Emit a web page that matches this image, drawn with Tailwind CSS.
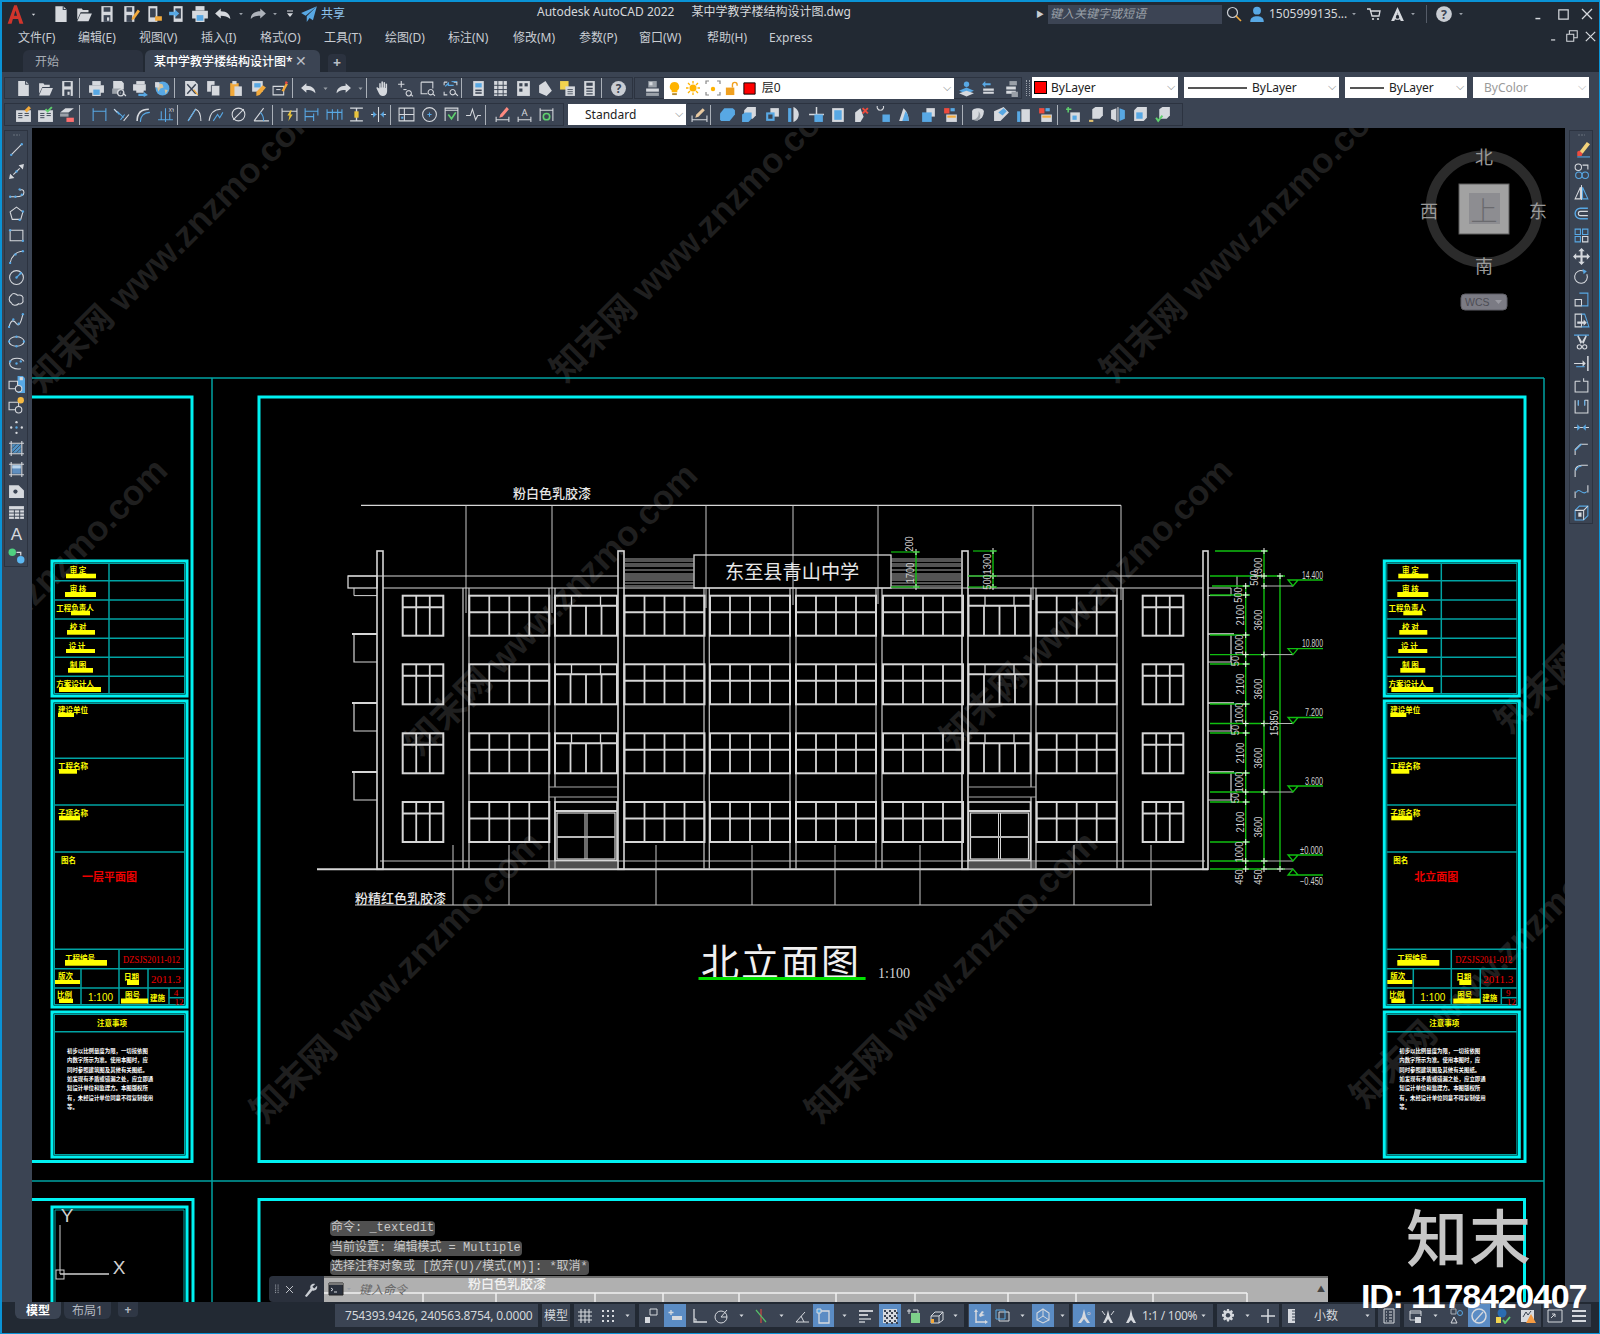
<!DOCTYPE html>
<html lang="zh">
<head>
<meta charset="utf-8">
<title>Autodesk AutoCAD 2022</title>
<script src="https://cdn.jsdelivr.net/npm/@tailwindcss/browser@4"></script>
</head>
<body class="bg-black">
<div id="app" class="relative w-[1600px] h-[1334px] overflow-hidden flex flex-col border-l-2 border-t-2 border-r border-b border-[#0a93d6] bg-[#222933] text-[#c9cdd3] text-xs font-['Noto_Sans','Noto_Sans_CJK_SC',sans-serif]">
  <!-- title bar -->
  <div class="h-[24px] flex items-center shrink-0 relative">
    <div id="quickBar" class="flex items-center h-full"></div>
    <div class="absolute left-[535px] top-[2px] flex gap-[17px] text-[#d5d8dc] whitespace-nowrap text-[12px]">
      <span>Autodesk AutoCAD 2022</span><span>某中学教学楼结构设计图.dwg</span>
    </div>
    <div id="titleRight" class="absolute left-[1034px] top-0 h-full flex items-center"></div>
  </div>
  <!-- menu bar -->
  <div class="h-[20px] flex items-center shrink-0 relative pl-[16px]">
    <div id="menuBar" class="flex items-center whitespace-nowrap pt-[3px]"></div>
    <div id="docBtns" class="absolute left-[1543px] top-0 h-full flex items-center"></div>
  </div>
  <!-- tabs -->
  <div class="h-[26px] flex items-end shrink-0 pl-[21px]">
    <div class="w-[120px] h-[22px] bg-[#2b323f] rounded-t-md pl-[12px] pt-[1px] flex items-center text-[#a8adb5]">开始</div>
    <div class="w-[175px] h-[22px] ml-[2px] bg-[#3b4453] rounded-t-md pl-[9px] pt-[1px] flex items-center text-white relative font-medium whitespace-nowrap">某中学教学楼结构设计图*
      <span class="absolute left-[150px] top-[2px] text-[#b9bec6] text-[14px]">✕</span></div>
    <div class="w-[18px] h-[18px] ml-[8px] bg-[#2b323f] rounded-t flex items-center justify-center text-[#b9bec6] text-[14px] font-bold">+</div>
  </div>
  <!-- toolbars -->
  <div class="h-[56px] shrink-0 bg-[#3b4453] pt-[5px] pl-[2px] flex flex-col gap-[4px]">
    <div class="flex h-[22px] items-stretch gap-[1px]">
      <div id="row1a" class="w-[629px] flex items-center border border-[#2c3340] pl-[7px]"></div>
      <div class="w-[388px] flex items-center border border-[#2c3340]">
        <div id="row1layer" class="flex items-center w-[29px] pl-[7px]"></div>
        <div class="w-[292px] h-[21px] bg-white flex items-center text-[#222] relative">
          <div id="layerIcons" class="flex items-center pl-[3px]"></div>
          <span class="ml-[3px]">层0</span>
          <span class="absolute right-[3px] top-[2px] text-[#8a8a8a] text-[11px]">⌵</span>
        </div>
        <div id="row1b" class="flex items-center pl-[1px]"></div>
      </div>
      <div class="w-[4px] ml-[3px] border-x border-dotted border-[#9aa0aa] my-[3px]"></div>
      <div class="w-[146px] ml-[1px] h-[21px] bg-white flex items-center text-[#222] relative pl-[1px]">
        <span class="w-[13px] h-[13px] bg-[#ff0000] border border-black mr-[4px] ml-[1px]"></span>ByLayer
        <span class="absolute right-[3px] top-[2px] text-[#8a8a8a] text-[11px]">⌵</span></div>
      <div class="w-[155px] ml-[5px] h-[21px] bg-white flex items-center text-[#222] relative pl-[4px]">
        <span class="w-[59px] h-[2px] bg-[#555] mr-[5px]"></span>ByLayer
        <span class="absolute right-[3px] top-[2px] text-[#8a8a8a] text-[11px]">⌵</span></div>
      <div class="w-[122px] ml-[5px] h-[21px] bg-white flex items-center text-[#222] relative pl-[5px]">
        <span class="w-[34px] h-[2px] bg-[#555] mr-[5px]"></span>ByLayer
        <span class="absolute right-[3px] top-[2px] text-[#8a8a8a] text-[11px]">⌵</span></div>
      <div class="w-[116px] ml-[5px] h-[21px] bg-white flex items-center text-[#9a9a9a] relative pl-[11px]">ByColor
        <span class="absolute right-[3px] top-[2px] text-[#b5b5b5] text-[11px]">⌵</span></div>
    </div>
    <div class="flex h-[23px] items-stretch gap-[1px]">
      <div id="row2a" class="w-[560px] flex items-center border border-[#2c3340] pl-[7px]"></div>
      <div class="w-[118px] ml-[3px] h-[21px] my-auto bg-white flex items-center text-[#222] relative pl-[17px]">Standard
        <span class="absolute right-[3px] top-[2px] text-[#8a8a8a] text-[11px]">⌵</span></div>
      <div id="row2b" class="w-[496px] flex items-center border-y border-r border-[#2c3340] pl-[1px]"></div>
    </div>
  </div>
  <!-- middle -->
  <div class="flex-1 flex min-h-0">
    <div class="w-[30px] shrink-0 bg-[#3b4453] pt-[2px] pl-[2px]">
      <div id="leftTools" class="w-[24px] border border-[#2c3340] flex flex-col items-center"></div>
    </div>
    <div class="flex-1 relative bg-black overflow-hidden">
      <svg id="drawing" class="absolute inset-0 block" width="1533" height="1174" viewBox="32 128 1533 1174" font-family="'Noto Sans CJK SC','Noto Sans',sans-serif"></svg>
      <!-- command history -->
      <div class="absolute left-[298px] top-[1093px] flex flex-col items-start gap-[4.500px] text-[12px] leading-[15px] text-[#c9c9c9] font-['Liberation_Mono','Noto_Sans_CJK_SC',monospace] whitespace-pre">
        <div class="bg-[#505050] rounded-sm px-[1px]">命令: _textedit</div>
        <div class="bg-[#505050] rounded-sm px-[1px]">当前设置: 编辑模式 = Multiple</div>
        <div class="bg-[#505050] rounded-sm px-[1px]">选择注释对象或 [放弃(U)/模式(M)]: *取消*</div>
      </div>
      <!-- command line -->
      <div class="absolute left-[237px] top-[1148px] w-[1059px] h-[26px] flex">
        <div id="cmdLeft" class="w-[55px] h-full bg-[#2a303c] rounded-l flex items-center pl-[3px]"></div>
        <div class="flex-1 bg-[#ebebeb]/75 flex items-center relative border-t-2 border-[#6f6f6f]">
          <span class="ml-[35px] italic text-[12px] text-[#666]">键入命令</span>
          <div id="cmdPrompt" class="absolute left-[4px] top-[3px] flex items-center"></div>
          <span class="absolute right-[3px] top-[6px] text-[8px] text-[#444]">▲</span>
        </div>
      </div>
    </div>
    <div class="w-[34px] shrink-0 bg-[#3b4453] pt-[2px] pl-[4px]">
      <div id="rightTools" class="w-[24px] border border-[#2c3340] flex flex-col items-center"></div>
    </div>
  </div>
  <!-- status bar -->
  <div class="h-[31px] shrink-0 relative flex items-start">
    <div class="w-[333px] shrink-0 flex items-start pl-[13px] h-full">
      <div class="w-[46px] h-[17px] bg-[#3b4453] rounded-b-md flex items-center justify-center text-white font-bold">模型</div>
      <div class="w-[47px] h-[17px] ml-[3px] bg-[#2f3745] rounded-b-md flex items-center justify-center text-[#b4b9c1]">布局1</div>
      <div class="w-[20px] h-[15px] ml-[7px] bg-[#2f3745] rounded-b flex items-center justify-center text-[#b4b9c1] font-bold">+</div>
    </div>
    <div id="statusBar" class="flex items-center h-[23px] mt-[2px]"></div>
  </div>
  <!-- overlay of the id stamp -->
  <span class="absolute left-[1404px] top-[1197px] text-[62px] leading-[72px] font-medium tracking-[1px] text-[#c6c6c6] font-['Noto_Sans_CJK_SC',sans-serif]">知末</span>
  <span class="absolute left-[1359px] top-[1276px] text-[34px] leading-[36px] font-bold tracking-[-1.200px] text-white font-['Liberation_Sans',sans-serif] whitespace-nowrap">ID: 1178420407</span>
</div>
<script>
const W = '#d6d9de', B = '#58a8e4', G = '#9aa0a8', O = '#f2a93b', R = '#ee4b3e', D = '#3b4453';
const F = (d, c = W) => `<path d="${d}" fill="${c}" stroke="none"/>`;
const S = (d, c = W, w = 1) => `<path d="${d}" stroke="${c}" stroke-width="${w}" fill="none"/>`;
const P = (x, y, c = B, r = 1.1) => `<circle cx="${x}" cy="${y}" r="${r}" fill="${c}" stroke="none"/>`;
const RC = (x, y, w, h, c = W) => `<rect x="${x}" y="${y}" width="${w}" height="${h}" fill="${c}" stroke="none"/>`;

const ic = {
  logoA: F('M2 15L7 1h2l5 14h-3l-1-3.5H6L5 15zM6.8 9h2.4L8 5z', '#d0352c'),
  caret: F('M5 6.5h6L8 10z', W),
  caretG: F('M5 6.5h6L8 10z', G),
  lines3: S('M4 4h8', W, 1.4) + F('M4 7h8L8 12z', W),
  new: F('M3 1h7l3 3v11H3z') + S('M10 1v3h3', D, 1),
  open: F('M2 3h4l1 1.5h5v2H5L2 13z') + F('M5 7.5h10L12 14.5H2z'),
  save: F('M3 1h10v14H3z') + RC(5, 2, 6, 4, D) + RC(5, 9, 6, 6, D) + RC(8, 11, 2, 3),
  saveas: F('M2 1h9v14H2z') + RC(4, 2, 5, 4, D) + RC(4, 9, 5, 6, D) + F('M9 11l5-7 2 1.5-5 7-2.5 1z', O),
  phone: F('M3 1h8v14H3z', W) + RC(4.5, 3, 5, 8, D) + F('M9 10h6v4H9z', O),
  phoneSend: F('M5 1h8v14H5z', W) + RC(6.5, 3, 5, 9, D) + F('M1 6h5V4l4 3.5-4 3.5V9H1z', B),
  print: F('M4 1h8v4H4z') + F('M1 5h14v7h-3v3H4v-3H1z') + RC(5, 9, 6, 5, B),
  preview: F('M3 1h8l2 2v6H3z') + F('M2 8h8v5H2z', G) + S('M11 10a2.5 2.5 0 1 0 .1 0M12.5 12.5l2.5 2.5', D, 1.4) + S('M10 9a3 3 0 1 0 .1 0M12 12l3 3', W, 1.2),
  plot: F('M4 1h8v3H4z') + F('M1 4h12v6H1z') + RC(4, 8, 7, 4) + F('M6 13h5v-2l4 3-4 2v-1H6z', B),
  globe: `<circle cx="8" cy="8" r="6.5" fill="${B}" stroke="none"/>` + F('M4 3l4 1 1 3-3 1-2 3-1-4zM10 9l3 .5-2 4z', '#d9c59a') + F('M1 2h4v5H1z', W),
  cut: F('M2 1h9l3 3v11H2z') + S('M4 4l8 9M12 4l-8 9', D, 1.3) + S('M10 9l4 5', O, 1.2),
  copy: F('M2 1h7v10H2z') + F('M6 5h8v10H6z') + S('M6 5h8v10H6z', D, .8),
  paste: F('M3 3h8v12H3z', O) + RC(5, 1, 4, 3) + F('M7 6h7v9H7z'),
  match: F('M2 1h10v10H2z') + RC(4, 3, 6, 4, B) + F('M6 11l6-6 3 2-6 7-3 1z', O),
  brush: S('M1 6h10v8H1z') + S('M4 9h4') + F('M9 10l4-7 2 1-4 7z', O) + F('M13 1l2 1-1 2-2-1z', R),
  undo: F('M6 3L1 7.5 6 12V9.5c3.5 0 6 .5 8.5 3 0-4-3-7-8.5-7z'),
  redo: F('M10 3l5 4.5L10 12V9.5c-3.5 0-6 .5-8.5 3 0-4 3-7 8.5-7z', '#aeb3bb'),
  redoW: F('M10 3l5 4.5L10 12V9.5c-3.5 0-6 .5-8.5 3 0-4 3-7 8.5-7z'),
  hand: F('M4 8V3.5c0-1 1.4-1 1.4 0V7h.6V2c0-1 1.5-1 1.5 0v5h.5V2.6c0-1 1.5-1 1.5 0V7.5h.5V4c0-1 1.4-1 1.4 0v6.5c0 3-1.8 4.5-4 4.5-2 0-3-1-4-3L1.5 8c-.5-1 .7-1.5 1.3-.7z'),
  zoomrt: S('M4 1v6M1 4h6') + S('M6 9h3') + S('M11 10a2.5 2.5 0 1 0 .1 0M12.7 13l2.3 2.3'),
  zoomwin: S('M2 2h11v6M2 2v11h6') + S('M11 9a2.5 2.5 0 1 0 .1 0M12.7 12.5l2.3 2.5'),
  zoomprev: S('M2 2h3M11 2h3v3M2 2v3M2 11v3h3') + F('M9 1h5v1H9z', B) + S('M3 6l3-3v2h5', B, 1.2) + S('M10 9a2.5 2.5 0 1 0 .1 0M12 12l3 3'),
  props: F('M3 1h10v14H3z') + RC(5, 3, 6, 4, B) + RC(5, 9, 6, 1.5, D) + RC(5, 11.5, 6, 1.5, D),
  sheet: F('M2 1h12v14H2z') + S('M5.5 1v14M10.5 1v14M2 5h12M2 9h12M2 13h12', D, .9),
  tool: F('M2 1h12v14H2z') + RC(4, 3, 3, 3, D) + RC(9, 3, 3, 3, D) + RC(4, 8, 3, 3, D) + RC(9, 8, 3, 6, W),
  design: F('M2 5l6-4 6 9-5 5-7-3z'),
  markup: F('M1 1h8v8H1z', '#f2d34f') + F('M6 6h9v9H6z') + S('M8 9h5M8 11h5M8 13h5', D, .8),
  calc: F('M3 1h10v14H3z') + RC(5, 2.5, 6, 3, D) + S('M5 8h6M5 10.5h6M5 13h6', D, 1.2),
  help: `<circle cx="8" cy="8" r="7" fill="#c9cdd3" stroke="none"/><text x="8" y="12" text-anchor="middle" font-size="11" font-weight="700" fill="#3b4453" stroke="none">?</text>`,
  layers: F('M2 8h12v3H2z') + F('M2 12h12v3H2z', G) + F('M4 1h8v6H4z', G) + RC(5, 2, 3, 3),
  bulb: F('M8 1a5 5 0 0 1 3 9v2H5v-2a5 5 0 0 1 3-9z', '#ffb300') + RC(5.5, 13, 5, 2, '#b58a2d'),
  sun: `<circle cx="8" cy="8" r="3.5" fill="#ffb300" stroke="none"/>` + S('M8 1v2.5M8 12.5V15M1 8h2.5M12.5 8H15M3 3l2 2M11 11l2 2M13 3l-2 2M5 11l-2 2', '#ffb300', 1.3),
  freeze: S('M1 4V1h3M12 1h3v3M15 12v3h-3M4 15H1v-3', '#888', 1.2) + `<circle cx="8" cy="9" r="2.2" fill="#ffb300" stroke="none"/>`,
  lock: F('M2 7h9v8H2z', '#f0a020') + S('M9 7V4a2.5 2.5 0 0 1 5 0v1', '#f0a020', 1.5),
  redsq: RC(2, 2, 12, 12, '#ff0000') + S('M2 2h12v12H2z', '#000', 1),
  lay1: F('M1 10l7-3 7 3-7 3z', B) + F('M1 12.5l7 3 7-3-7-2.5z') + `<circle cx="8" cy="4" r="2.5" fill="${B}" stroke="none"/>`,
  lay2: F('M3 8h10v2H3zM3 11h10v2H3z') + F('M5 1l-3 3 3 3V5h5V3H5z', B),
  lay3: F('M4 6h9v3H4zM4 10h9v3H4z') + F('M7 1h7v4H7z', G) + RC(9, 11, 6, 5, G),
  note: F('M1 4h14v11H1z') + S('M3 7h4M3 9h4M3 11h4M9 7h4M9 9h4', D, .9) + F('M9 4l4-4 2 2-4 4z', O),
  noteOk: F('M1 4h14v11H1z') + S('M3 7h4M3 9h4M3 11h4M9 7h4M9 9h4', D, .9) + S('M8 3l2 2 4-4', '#5fd06e', 1.8),
  eraser: F('M1 6l5-4h8L9 6z') + F('M1 7h8v3H1z', G) + F('M7 11h7v4H7z', '#ff6f6f'),
  dimL: S('M2 2v12M14 2v12M2 5h12', B),
  dimA: S('M1 3l5 5M7 13l4-5M4 5l6 6', B) + S('M1 3l3 3M10 14l5-6', W),
  dimArc: S('M2 14c0-7 4-11 11-11', W, 1.5) + S('M5 15c0-5 3-9 9-9', B),
  dimOrd: S('M1 13h14M8 2v13M4 5v8M12 7v6', B) + `<text x="11" y="6" font-size="5" fill="${W}" stroke="none">XY</text>`,
  dimRad: S('M2 14L9 3c3 1 5 5 5 11', W) + S('M2 14L9 3', B),
  dimJog: S('M1 14C2 7 6 3 12 3') + S('M5 14l4-6 2 3 3-5', B),
  dimDia: `<circle cx="8" cy="8" r="6" fill="none"/>` + S('M3 13L13 3', W),
  dimAng: S('M1 14h14M1 14L10 2') + S('M7 6c2 2 3 5 3 8', B),
  dimQuick: S('M1 2v12M15 2v12M1 5h14') + F('M9 4l-3 5h2l-1 5 4-6H9l1-4z', '#e8c33c'),
  dimBase: S('M2 2v12M14 2v7M2 5h12M2 10h8M10 7v7', B),
  dimCont: S('M1 3v10M6 3v10M11 3v10M15 3v10M1 6h14', B),
  dimSpace: S('M2 2h12M2 14h12M8 2v12', W, 1.3) + RC(6, 5, 4, 6, '#e8c33c'),
  dimBreak: S('M8 1v14M1 8h5M10 8h5', W) + F('M3 5l3 3-3 3zM13 5l-3 3 3 3z', B),
  tol: S('M1 2h14v12H1zM6 2v12M1 8h14', W) + F('M3 10h2v2H3z', B),
  center: `<circle cx="8" cy="8" r="6.5" fill="none"/>` + S('M6 8h4M8 6v4', B),
  inspect: S('M2 14V2h12v12M2 4h12') + S('M5 8l3 4 4-6', '#5fd06e', 1.6),
  jog: S('M1 9h4l2-6 3 10 2-4h3', W),
  editT: S('M2 13h12M2 10v5M14 10v5') + F('M6 8l6-7 2 2-6 7-3 1z', '#ff8a80'),
  textA: S('M2 13h12M2 10v5M14 10v5') + `<text x="8" y="9" text-anchor="middle" font-size="9" fill="${W}" stroke="none">A</text>`,
  update: S('M2 2v12M14 2v12M2 4h12') + `<circle cx="8" cy="10" r="3" fill="none" stroke="#5fd06e" stroke-width="1.5"/>`,
  dimSt: S('M1 13h14M1 9v6M15 9v6') + F('M5 8l6-6 2 2-6 6-3 1z', '#e8c9a0'),
  sol1: F('M1 7l4-5h8l2 2v4l-5 6H2l-1-1z', B),
  sol2: F('M3 4l3-3h8v8l-3 3H3z', W) + F('M1 8l3-2h6v6l-3 3H1z', B),
  sol3: F('M6 2h8v8H6z') + F('M2 6h8v8H2z', B) + RC(4, 8, 4, 4, D),
  half: F('M2 2h3v13H2z', B) + F('M7 1c3 1 5 4 5 7s-2 6-5 7z', W),
  pmove: S('M8 1v14M1 8h14', W, 1.4) + F('M6 8h8v7H6z', B),
  pface: F('M2 2h11v13H2z') + RC(4, 4, 7, 9, B),
  pdel: F('M2 15V6l5-4 3 8-3 5z') + S('M9 2l5 5M14 2L9 7', R, 1.8),
  prot: S('M5 4a3 3 0 1 1 .1 0') + F('M7 8h7v7H7z', B),
  pcopy: F('M2 14L6 2c3 2 5 7 5 12z', W) + F('M5 14l3-9c2 2 3 5 3 9z', B),
  pext: F('M6 2h8v8H6z') + F('M2 6h9v9H2z', B),
  pcol: F('M2 2h5v5H2z', R) + F('M8 2h4v3H8z', B) + F('M4 8h10v7H4z') + RC(5, 9, 8, 2, O),
  cylA: F('M2 13V5c0-4 11-4 11 0 0 5-3 10-11 8z') + F('M2 13c4 0 7-3 6-8 2 2 3 6-1 9z', G),
  cylB: F('M1 14V5l9-4 5 5-8 8z') + F('M5 6l5-4 3 3-4 4z', B),
  cylC: F('M6 3h8v12H6z', W) + F('M2 5h3v10H2z', B),
  plusBox: F('M5 6h9v9H5z', W) + RC(7, 9, 4, 4, B) + S('M3 1v5M1 3h5', '#5fd06e', 1.4),
  boxG: F('M4 3l3-2h7v8l-3 3H4z', W) + F('M1 13h4v2H1z', '#e0c070'),
  splitBox: F('M1 4l5-2v12l-5-2z', W) + F('M9 2l5 2v8l-5 2z', B) + RC(7, 1, 1, 14),
  ext3: F('M2 4l3-3h9v10l-3 3H2z', W) + RC(4, 6, 6, 6, B),
  okBox: F('M4 3l3-2h7v8l-3 3H4z', W) + S('M1 11l2 3 4-5', '#5fd06e', 1.8),
  /* left tools */
  tLine: S('M3 13L13 3') + P(3, 13) + P(13, 3),
  tArrow: S('M5 11l6-6') + F('M1 15l1-5 4 4zM15 1l-1 5-4-4z') + P(8, 8),
  tPoly: S('M2 12h5c5 0 8-1 8-4 0-3-3-3-4-2') + P(2, 12) + P(7, 12) + P(13, 10) + P(11, 5),
  tPgon: S('M8 2l6 4.5-2 7H4l-2-7z') + P(11, 14) + P(14, 6),
  tRect: S('M2 3h12v10H2z') + P(2, 3) + P(14, 13),
  tArc: S('M2 14C3 8 8 3 14 3') + P(2, 14) + P(7, 6) + P(14, 3),
  tCirc: `<circle cx="8" cy="8" r="6.5" fill="none"/>` + S('M8 8l4-4', B) + P(8, 8) + P(12, 4),
  tCloud: S('M3 4c2-3 5-1 6 0 3-1 6 1 5 4 1 3-2 5-4 4-2 2-6 2-7-1-2-1-3-5 0-7z'),
  tSpl: S('M1 14c2-8 5-6 7-3s4 0 6-9') + P(1, 14) + P(5, 7) + P(10, 11) + P(14, 2),
  tEll: `<ellipse cx="8" cy="8" rx="7" ry="4.5" fill="none"/>` + P(8, 3.5) + P(8, 12.5) + P(15, 8) + P(1, 8),
  tEArc: S('M12 13C6 14 0 11 2 6c2-4 11-4 13 0') + P(2, 6) + P(8, 8) + P(12, 6),
  tIns: F('M9 0h5l2 2v14H9z', B) + F('M11 1h3v3h-3z') + S('M1 5h8v7H1z') + `<circle cx="10" cy="12" r="3" fill="${D}" stroke="${W}"/>`,
  tBlk: S('M1 5h9v7H1z') + `<circle cx="10" cy="12" r="3" fill="${D}" stroke="${W}"/>` + `<circle cx="12" cy="3" r="3" fill="#f5b942" stroke="none"/>`,
  tPts: P(8, 3, W) + P(3, 8, W) + P(13, 8, W) + P(8, 13, W) + P(8, 8, B),
  tHatch: S('M3 1v14M13 1v14M1 3h14M1 13h14') + `<rect x="4" y="4" width="8" height="8" fill="${B}" opacity=".8" stroke="none"/>` + S('M4 8l4-4M4 12l8-8M8 12l4-4', D, .8),
  tGrad: S('M3 1v14M13 1v14M1 3h14M1 13h14') + RC(4, 4, 8, 8, '#5f8fc0') + RC(4, 4, 8, 3, '#b9d4ec'),
  tRegion: F('M1 2h9l5 5v7H1z') + `<circle cx="7" cy="8" r="2" fill="${D}" stroke="none"/>`,
  tTable: F('M1 2h14v12H1z') + S('M1 5.5h14M1 8.5h14M1 11.5h14M6 5.5v8.5M11 5.5v8.5', D, .9),
  tText: `<text x="8" y="14" text-anchor="middle" font-size="16" fill="${W}" stroke="none" font-family="Liberation Sans">A</text>`,
  tGreen: `<circle cx="4" cy="5" r="3.5" fill="#4fd080" stroke="none"/><circle cx="12" cy="12" r="3.5" fill="#5cb8f2" stroke="none"/>` + S('M8 5h4v3', W, 1.2),
  /* right tools */
  rEras: F('M6 10L13 1l3 2-7 9z', '#f3d27a') + F('M4 10l2-1 3 3-1 2H4z', R) + S('M4 15h12', B),
  rCopy: `<circle cx="5" cy="4" r="3" fill="none"/>` + S('M9 2h5v4') + `<circle cx="5.5" cy="11.5" r="3" fill="none" stroke="${B}"/><circle cx="11.5" cy="11.5" r="3" fill="none" stroke="${B}"/>`,
  rMirror: S('M7 3L2 14h5z') + S('M9 3l5 11H9z', B) + S('M8 1v14'),
  rOffset: S('M14 3H7a5 5 0 0 0 0 10h7', B, 1.3) + S('M14 6H7a2 2 0 0 0 0 4h7', W),
  rArray: S('M2 2h5v5H2zM9 2h5v5H9zM2 9h5v5H2z', B) + S('M9 9h5v5H9z', W),
  rMove: F('M8 0l3 3H9v4h4V5l3 3-3 3V9H9v4h2l-3 3-3-3h2V9H3v2L0 8l3-3v2h4V3H5z'),
  rRot: S('M13 5a6 6 0 1 1-3-3') + F('M9 0l4 2-3 3z', B),
  rScale: S('M2 8h6v6H2z') + S('M6 2h8v12H8', B),
  rStretch: S('M2 2h6v12H2z') + S('M8 2h3l4 12H8', B) + F('M4 9h6V7l3 3-3 3v-2H4z'),
  rTrim: S('M1 2h14', B, 1.2) + F('M5 2l4 7-2 1-3-7zM12 2L8 9l2 1 3-7z') + `<circle cx="6" cy="13" r="2" fill="none"/><circle cx="11" cy="13" r="2" fill="none"/>`,
  rExt: S('M14 1v14', W, 1.4) + S('M1 8h10', W) + F('M9 5l3 3-3 3z', W) + S('M3 11h8', B),
  rBreak1: S('M2 5h5M10 2v3h4v10H2V5'),
  rBreak2: S('M2 3v12h12V3H11M5 3h0M5 3v5M11 3v5', W) + S('M5 3v5M11 3v5', B),
  rJoin: S('M1 8h14', W) + F('M4 5l3 3-3 3zM12 5L9 8l3 3z', B),
  rCham: S('M2 14V9l5-5h7', W) + S('M2 10L8 4', B),
  rFil: S('M2 15V9c0-3 3-5 6-5h6') + S('M3 9c0-2 2-4 5-4', B),
  rBlend: S('M2 14V8M14 2v7', W) + S('M3 9c3-6 6 4 10-1', B),
  rCube: S('M2 6l4-4h8v9l-4 4H2z', B) + S('M2 6h8v9M10 6l4-4') + RC(5, 8, 3, 4, W),
  /* status */
  grid: S('M4 1v14M8 1v14M12 1v14M1 4h14M1 8h14M1 12h14', W, 1.1),
  dots: `<g fill="${W}" stroke="none">` + [3, 8, 13].map(x => [3, 8, 13].map(y => `<rect x="${x - 1}" y="${y - 1}" width="2" height="2"/>`).join('')).join('') + `</g>`,
  stInfer: S('M7 1h7v6H7z') + F('M2 9h5v6H2z'),
  stDyn: S('M4 2v5M1.5 4.5h5', W, 1.3) + F('M5 8h10v4H5z'),
  stOrtho: S('M3 1v13h13', W, 1.3) + S('M3 11h2v3', W),
  stPolar: `<circle cx="8" cy="9" r="6" fill="none"/>` + S('M8 9l6-7M8 9h6', W),
  stIso: S('M8 1v14', R) + S('M3 2l10 12', '#56c06a', 1.2),
  stAng: S('M2 14h13M2 14L11 4') + S('M7 8l3 6', W),
  stFrame: S('M3 3h10v12H3z', W, 1.3) + RC(1, 1, 4, 4, B) + S('M1 1h4v4H1z', W),
  stLw: S('M1 3h14', W, 1.8) + S('M1 7h9', W, 1.8) + S('M1 11h12', W, 1.3) + S('M1 14h6', W, 1.3),
  stTrans: F('M1 1h14v14H1z', W) + `<g fill="${D}" stroke="none">` + [1, 6, 11].map(x => [1, 6, 11].map(y => `<rect x="${x + 1}" y="${y + 1}" width="2" height="2"/><rect x="${x + 3}" y="${y + 3}" width="2" height="2"/>`).join('')).join('') + `</g>`,
  stCyc: F('M5 5h9v10H5z', '#7ed08a') + S('M3 1v5M1 3h4M7 2h5v3', W),
  st3d: S('M2 8l4-4h8v8l-4 3H2z') + S('M2 8h8v7M10 8l4-4') + RC(2, 11, 3, 4, O),
  stUcs: S('M4 15V3', W, 1.5) + S('M4 14h10', W, 1.5) + F('M2 4l2-3 2 3z') + F('M13 12l3 2-3 2z') + F('M7 7l3-4 2 1-2 2 3 1-5 2z', W),
  stDashF: S('M4 4h10v9H4z', W) + S('M1 2h9v9H1z', B),
  stGiz: S('M8 1l6 4v7l-6 3-6-3V5z', W, 1.1) + S('M8 8V1M8 8l6 4M8 8l-6 4', W, 1),
  stAnn1: F('M8 1l2 8 4 6h-3l-3-4-3 4H2l4-6z') + `<text x="11" y="7" font-size="6" fill="${W}" stroke="none">o</text>`,
  stAnn2: F('M8 2l1.5 6 3.5 7h-2.5L8 11l-2.5 4H3l3.5-7z') + S('M2 3l3 4M14 3l-3 4', W),
  stAnn3: F('M8 1l1.5 7 3.5 7h-2.5L8 12l-2.5 3H3l3.5-7z'),
  gear: F('M7 1h2l.5 2.2 2-1.2L13 3.500l-1.200 2L14 6v2.500l-2.200.5L13 11l-1.500 1.500-2-1.200L9 13.500H7l-.5-2.200-2 1.200L3 11l1.200-2L2 8.500V6l2.200-.5L3 3.500 4.500 2l2 1.200z') + `<circle cx="8" cy="7.300" r="2.200" fill="${D}" stroke="none"/>`,
  plus: S('M8 1v14M1 8h14', W, 1.5),
  ruler: F('M4 1h7v14H4z') + S('M8 3h3M8 6h3M8 9h3M8 12h3', D, 1),
  custom: S('M3 1h10v14H3z') + S('M5 4h1M8 4h3M5 7h1M8 7h3M5 10h1M8 10h3M5 13h1M8 13h3'),
  unlock: S('M2 3h11v5M2 3v9h5M2 5h11') + F('M7 9h6v6H7z'),
  isoObj: S('M3 1h5v5H3z', '#a9aeb6') + `<circle cx="12" cy="5" r="2.5" fill="none" stroke="${B}"/>` + S('M6 9l3 6H3z'),
  noteCircle: `<circle cx="8" cy="8" r="7" fill="none" stroke-width="1.5"/>` + S('M4 13L12 4', W, 1.2),
  globeOk: `<circle cx="7" cy="5" r="4.5" fill="#2b6cb0" stroke="none"/>` + F('M1 9h5v6H1z', '#f2d34f') + S('M8 12l2 3 5-6', '#5fd06e', 1.8),
  warn: F('M1 2h13v12H1z', W) + S('M3 9l3-5 2 3 3-4', D, 1) + F('M11 6l5 9H6z', '#f59b42'),
  fitWin: S('M1 2h14v12H1z') + S('M4 10l4-4M8 6H5M8 6v3', W),
  menu3: S('M1 3h14M1 8h14M1 13h14', W, 1.8),
  grip: `<g fill="#9aa0aa" stroke="none">` + [2, 5, 8, 11, 14].map(x => `<rect x="${x}" y="6" width="1" height="1"/><rect x="${x}" y="9" width="1" height="1"/>`).join('') + `</g>`,
  plane: F('M15 1L1 7l4 2.5zM15 1L6 10v5l2.5-3.5 3 2z', B),
  search: `<circle cx="6.500" cy="6.500" r="5" fill="none" stroke="#c9cdd3" stroke-width="1.200"/>` + S('M10 10l5 5', O, 1.600),
  user: `<circle cx="8" cy="5" r="3.5" fill="${B}" stroke="none"/>` + F('M2 15c0-4 3-5 6-5s6 1 6 5z', B),
  cart: S('M1 3h3l2 7h7l1-5H5', W, 1.3) + P(7, 13, W) + P(12, 13, W),
  a360: F('M8 1l6 13h-3L8 6 5 14H2z') + `<circle cx="8" cy="10" r="2.5" fill="none" stroke="${W}"/>`,
  minB: S('M3 13h6', W, 1.8),
  maxB: S('M3 3h10v10H3z', W, 1.3),
  xB: S('M3 3l10 10M13 3L3 13', W, 1.3),
  restB: S('M2 6h8v8H2zM5 6V2h9v8h-4', W, 1.2),
  gripV: `<g fill="#aeb3bb" stroke="none">` + [1, 4, 7, 10, 13].map(y => `<rect x="5" y="${y}" width="1.5" height="1.5"/><rect x="9" y="${y}" width="1.5" height="1.5"/>`).join('') + `</g>`,
  wrench: F('M2 15l6-8c-1-3 1-6 5-5l-3 3 2 2 3-3c1 4-3 6-5 5l-6 7z', '#c9cdd3'),
  prompt: RC(1, 2, 14, 12, '#2a303c') + S('M1 2h14v12H1z', '#222', 1) + S('M3 7l2 1.5L3 10M6 11h3', W, 1) + RC(1, 2, 14, 2, '#777'),
};

const icon = (name, size = 17) => `<svg class="block" width="${size}" height="${size}" viewBox="0 0 16 16" fill="none" stroke="${W}" stroke-width="1">${ic[name] || ''}</svg>`;
const cell = (name, w = 22, size = 17) => `<div class="flex items-center justify-center h-[23px] shrink-0" style="width:${w}px">${icon(name, size)}</div>`;

function renderRow(list) {
  return list.map(n => {
    if (n === '|') return '<div class="w-[6px] h-[20px] shrink-0 flex"><div class="w-[1px] h-full bg-[#aab0b8]"></div></div>';
    if (n === '||') return '<div class="w-[9px] h-[20px] shrink-0 flex"><div class="w-[1px] h-full bg-[#aab0b8]"></div></div>';
    if (n === 'v') return cell('caretG', 12, 11);
    return cell(n, 22.3, 17);
  }).join('');
}

// title bar
document.getElementById('quickBar').innerHTML = [
  ['logoA', 27, 21], ['caret', 9, 11], ['', 12, 1], ['new', 22, 18], ['open', 23, 18], ['save', 24, 18], ['saveas', 23, 18],
  ['phone', 24, 18], ['phoneSend', 22, 18], ['print', 24, 18], ['undo', 22, 18], ['caretG', 13, 10], ['redo', 21, 18], ['caretG', 13, 10], ['lines3', 17, 12], ['plane', 22, 18]
].map(c => cell(c[0], c[1], c[2])).join('') + '<span class="text-[#8ec4ee] ml-[1px]">共享</span>';

const titleRight = document.getElementById('titleRight');
titleRight.innerHTML = `<span class="text-[8px] mr-[4px] text-[#c9cdd3]">▶</span>
  <div class="w-[174px] h-[19px] bg-[#3c4454] flex items-center pl-[2px] italic text-[#9aa0a8]">键入关键字或短语</div>
  ${cell('search', 24, 16)}${cell('user', 21, 18)}
  <span class="ml-[2px] text-[#d5d8dc]">1505999135...</span>${cell('caretG', 14, 10)}
  ${cell('cart', 26, 16)}${cell('a360', 20, 17)}${cell('caretG', 12, 10)}
  <div class="w-[1px] h-[18px] bg-[#555c68] mx-[7px]"></div>${cell('help', 20, 18)}${cell('caretG', 14, 10)}
  <div class="w-[59px]"></div>${cell('minB', 24, 13)}${cell('maxB', 24, 15)}${cell('xB', 24, 16)}`;

// menu bar
const menus = [['文件(F)', 60], ['编辑(E)', 61], ['视图(V)', 62], ['插入(I)', 59], ['格式(O)', 64], ['工具(T)', 61], ['绘图(D)', 63], ['标注(N)', 65], ['修改(M)', 66], ['参数(P)', 60], ['窗口(W)', 68], ['帮助(H)', 62], ['Express', 60]];
document.getElementById('menuBar').innerHTML = menus.map(m => `<span style="width:${m[1]}px">${m[0]}</span>`).join('');
document.getElementById('docBtns').innerHTML = cell('minB', 18, 11) + cell('restB', 18, 14) + cell('xB', 18, 15);

// toolbars
document.getElementById('row1a').innerHTML = renderRow(['new', 'open', 'save', '|', 'print', 'preview', 'plot', 'globe', '|', 'cut', 'copy', 'paste', 'match', 'brush', '|', 'undo', 'v', 'redoW', 'v', '|', 'hand', 'zoomrt', 'zoomwin', 'zoomprev', '|', 'props', 'sheet', 'tool', 'design', 'markup', 'calc', '|', 'help']);
document.getElementById('row1layer').innerHTML = cell('layers', 20, 17);
document.getElementById('layerIcons').innerHTML = cell('bulb', 16, 15) + cell('sun', 21, 16) + cell('freeze', 19, 16) + cell('lock', 18, 15) + cell('redsq', 18, 15);
document.getElementById('row1b').innerHTML = cell('lay1', 22, 17) + cell('lay2', 22, 17) + cell('lay3', 22, 17);
document.getElementById('row2a').innerHTML = renderRow(['note', 'noteOk', 'eraser', '||', 'dimL', 'dimA', 'dimArc', 'dimOrd', '|', 'dimRad', 'dimJog', 'dimDia', 'dimAng', '|', 'dimQuick', 'dimBase', 'dimCont', 'dimSpace', 'dimBreak', '|', 'tol', 'center', 'inspect', 'jog', '|', 'editT', 'textA', 'update']);
document.getElementById('row2b').innerHTML = renderRow(['dimSt', '|', 'sol1', 'sol2', 'sol3', 'half', 'pmove', 'pface', 'pdel', 'prot', 'pcopy', 'pext', 'pcol', '|', 'cylA', 'cylB', 'cylC', 'pcol', '|', 'plusBox', 'boxG', 'splitBox', 'ext3', 'okBox']);

// side tools
const sideTool = n => `<div class="w-[22px] h-[21.35px] flex items-center justify-center shrink-0">${icon(n, 17)}</div>`;
const gripCell = `<div class="h-[8px] flex items-center">${icon('grip', 16).replace('height="16"', 'height="8"')}</div>`;
document.getElementById('leftTools').innerHTML = gripCell + ['tLine', 'tArrow', 'tPoly', 'tPgon', 'tRect', 'tArc', 'tCirc', 'tCloud', 'tSpl', 'tEll', 'tEArc', 'tIns', 'tBlk', 'tPts', 'tHatch', 'tGrad', 'tRegion', 'tTable', 'tText', 'tGreen'].map(sideTool).join('');
document.getElementById('rightTools').innerHTML = gripCell + ['rEras', 'rCopy', 'rMirror', 'rOffset', 'rArray', 'rMove', 'rRot', 'rScale', 'rStretch', 'rTrim', 'rExt', 'rBreak1', 'rBreak2', 'rJoin', 'rCham', 'rFil', 'rBlend', 'rCube'].map(sideTool).join('');

// command line
document.getElementById('cmdLeft').innerHTML = cell('gripV', 10, 14) + cell('xB', 14, 11) + '<div class="w-[5px]"></div>' + cell('wrench', 18, 15);
document.getElementById('cmdPrompt').innerHTML = icon('prompt', 16) + icon('caretG', 10);

// status bar
const panel = (items, ml) => `<div class="flex items-center h-[23px] bg-[#3b4453] shrink-0" style="margin-left:${ml}px">${items.join('')}</div>`;
const a = (n, w) => `<div class="h-[23px] flex items-center justify-center shrink-0" style="width:${w}px"><div class="w-[22px] h-[23px] bg-[#5b8cc4] flex items-center justify-center">${icon(n, 16)}</div></div>`;
const c = (n, w) => n === 'v' ? cell('caret', w, 11) : cell(n, w, 16);
document.getElementById('statusBar').innerHTML = [
  panel(['<span class="w-[203px] pl-[10px] text-[12px] text-[#d5d8dc] whitespace-nowrap tracking-[-.2px]">754393.9426, 240563.8754, 0.0000</span>'], 0),
  panel(['<span class="w-[28px] text-center text-[#d5d8dc]">模型</span>'], 4),
  panel([c('grid', 22), c('dots', 24), c('v', 15)], 4),
  panel([c('stInfer', 23), a('stDyn', 25), c('stOrtho', 23), c('stPolar', 22), c('v', 19), c('stIso', 20), c('v', 20), c('stAng', 22), a('stFrame', 21), c('v', 20), c('stLw', 23), a('stTrans', 25), c('stCyc', 24), c('st3d', 21), c('v', 17)], 4),
  panel([a('stUcs', 24), c('stDashF', 22), c('v', 17), a('stGiz', 24), c('v', 14)], 4),
  panel([a('stAnn1', 24), c('stAnn2', 23), c('stAnn3', 23), '<span class="w-[52px] text-center text-[#d5d8dc] whitespace-nowrap tracking-[-.3px]">1:1 / 100%</span>', c('v', 19)], 3),
  panel([c('gear', 21), c('v', 18), c('plus', 23)], 4),
  panel([c('ruler', 20), '<span class="w-[58px] pl-[12px] text-[#d5d8dc]">小数</span>', c('v', 15)], 3),
  panel([c('custom', 22)], 3),
  panel([c('unlock', 23), c('v', 17), c('isoObj', 23)], 4),
  panel([a('noteCircle', 24), c('globeOk', 24), c('warn', 26)], 0),
  panel([c('fitWin', 24), c('menu3', 24)], 2),
].join('');

// the drawing, in page coordinates
const CY = '#00f2f2', TL = '#00a3a3', YL = '#ffff00', RD = '#ee0000', LN = '#d6d6d6', GN = '#10c010';
let s = '';
const ln = (x1, y1, x2, y2, col = LN, w = 1) => { s += `<line x1="${x1}" y1="${y1}" x2="${x2}" y2="${y2}" stroke="${col}" stroke-width="${w}"/>`; };
const rc = (x, y, w, h, col = LN, sw = 1) => { s += `<rect x="${x}" y="${y}" width="${w}" height="${h}" fill="none" stroke="${col}" stroke-width="${sw}"/>`; };
const bar = (x, y, w, h, col = YL) => { s += `<rect x="${x}" y="${y}" width="${w}" height="${h}" fill="${col}"/>`; };
const tx = (x, y, t, size, fill, extra = '') => { s += `<text x="${x}" y="${y}" font-size="${size}" fill="${fill}" dominant-baseline="central" ${extra}>${t}</text>`; };
const rot = (x, y, t, size = 10) => { s += `<text x="${x}" y="${y}" transform="rotate(-90 ${x} ${y})" text-anchor="middle" dominant-baseline="central" font-size="${size}" fill="#cfcfcf" font-family="Liberation Sans" textLength="${t.length * 5.2}" lengthAdjust="spacingAndGlyphs">${t}</text>`; };

// background stamp
[[42, 394], [565, 384], [1115, 384], [1640, 384], [-110, 752], [420, 757], [955, 752], [1510, 735], [265, 1125], [820, 1125], [1365, 1110]].forEach(p => {
  s += `<text x="${p[0]}" y="${p[1]}" transform="rotate(-45 ${p[0]} ${p[1]})" font-size="35" font-weight="700" font-family="Liberation Sans,Noto Sans CJK SC" fill="#1f1f1f">知末网 www.znzmo.com</text>`;
});

// frames
ln(32, 378, 1544, 378, TL, 1.5); ln(1544, 378, 1544, 1302, TL, 1.5); ln(212, 378, 212, 1302, TL, 1.5); ln(32, 1181, 1544, 1181, TL, 1.5);
s += `<path d="M32 397H192V1161.5H32M259 397H1525V1161.5H259zM32 1199.5H193V1302M259 1302V1199.5H1524.5V1302" fill="none" stroke="${CY}" stroke-width="3"/>`;
s += `<path d="M52 1302V1207H187V1302" fill="none" stroke="${CY}" stroke-width="3"/><path d="M55 1302V1210H184V1302" fill="none" stroke="${TL}" stroke-width="1"/>`;
// axis icon
ln(60, 1225, 60, 1274, '#d0d0d0'); ln(60, 1274, 109, 1274, '#d0d0d0', 1.5); rc(56, 1270, 8, 9, '#d0d0d0');
s += `<text x="67" y="1222" text-anchor="middle" font-size="19" fill="#d0d0d0" font-family="Liberation Sans">Y</text><text x="119" y="1274" text-anchor="middle" font-size="19" fill="#d0d0d0" font-family="Liberation Sans">X</text>`;

// title block tables
function tables(dx, name, no) {
  const y6 = (x, y, t, an = 'start') => tx(x + dx, y, t, 7.5, YL, `font-weight="700" text-anchor="${an}"`);
  const by = (x1, x2, y1, y2) => bar(x1 + dx, y1, x2 - x1, y2 - y1);
  const box = (y1, y2) => { rc(52 + dx, y1, 135, y2 - y1, CY, 3); rc(54.5 + dx, y1 + 2.5, 130, y2 - y1 - 5, TL, 1); };
  const h = (y, x1 = 54.5, x2 = 184.5) => ln(x1 + dx, y, x2 + dx, y, TL, 1.5);
  const v = (x, y1, y2) => ln(x + dx, y1, x + dx, y2, TL, 1.5);
  box(561, 696); [580.7, 600, 619, 638.3, 657.3, 676.3].forEach(y => h(y)); v(109, 563, 694);
  [['审 定', 78, 569, 66, 96, 573.7, 578.3], ['审 核', 78, 588, 65, 96, 592, 597], ['工程负责人', 75, 607, 71, 90, 610.7, 615.3], ['校 对', 78, 626, 67, 95, 630, 634.7], ['设 计', 77, 645, 66, 95, 649, 653], ['制 图', 78, 664, 68, 93, 668, 672.7], ['方案设计人', 75, 683, 59, 101, 687, 692]].forEach(r => { by(r[3], r[4], r[5], r[6]); y6(r[1], r[2], r[0], 'middle'); });
  box(701, 1007); [758.3, 805, 852, 949.3, 968.7, 988].forEach(y => h(y));
  by(58, 74, 712.7, 717); y6(58, 709, '建设单位'); by(59, 77, 769, 773.7); y6(58, 765, '工程名称'); by(59, 80, 815.7, 820.3); y6(58, 812, '子项名称'); y6(61, 859, '图名');
  tx(82 + dx, 876, name, 11, RD, 'font-weight="700"');
  v(119, 949.3, 1005); v(81, 968.7, 1005); v(148, 968.7, 1005); v(169, 988, 1005); h(997.7, 169);
  by(65, 107, 960, 965.7); y6(80, 957, '工程编号', 'middle');
  tx(123 + dx, 959, 'DZSJS2011-012', 10, RD, 'font-family="Liberation Serif" textLength="57" lengthAdjust="spacingAndGlyphs"');
  by(55, 80, 980, 984); y6(58, 975.6, '版次'); by(127, 139, 980, 985); y6(124, 976, '日期');
  tx(151 + dx, 978.7, '2011.3', 11, RD, 'font-family="Liberation Serif"');
  by(59, 73, 998.7, 1003); y6(57, 994.7, '比例'); tx(88 + dx, 997, '1:100', 10, YL, 'font-family="Liberation Sans"');
  by(121, 148, 998.5, 1003.5); y6(125, 994, '图号'); y6(150, 997.7, '建施');
  tx(176 + dx, 993, no, 9, RD, 'text-anchor="middle" font-family="Liberation Serif"'); tx(179 + dx, 1002, '12', 9, RD, 'text-anchor="middle" font-family="Liberation Serif"');
  box(1012, 1157); h(1031.7); y6(112, 1022, '注意事项', 'middle');
  ['初步以比例量度为限，一切按依图', '内数字所示为准。使用本图时，应', '同时参照建筑图及其他有关图纸。', '如发现有矛盾或错漏之处，应立即通', '知设计单位和监理方。本图版权所', '有，未经设计单位同意不得复制使用', '等。'].forEach((t, i) => tx(67 + dx, 1051 + i * 9.33, t, 5.4, '#ffffff', 'font-weight="700"'));
}
tables(0, '一层平面图', '4');
tables(1332.3, '北立面图', '9');

// elevation: outlines
ln(361, 505.3, 1121, 505.3, LN, 1.2);
[[466, 613], [552, 613], [706, 608], [793, 605], [878, 604], [1033, 600], [1121, 600]].forEach(p => ln(p[0], 505.3, p[0], p[1], '#c8c8c8', 1));
ln(317, 869.3, 1208, 869.3, LN, 2); ln(380, 861, 1205, 861, '#bdbdbd', 1.2); ln(355, 905, 1152, 905, LN, 1.2);
[453, 509, 656, 752, 835, 920, 1074, 1151].forEach(x => { ln(x, 845, x, 905, '#c8c8c8', 1); });
[[377, 383], [618, 624], [962, 968], [1203, 1208]].forEach(p => { rc(p[0], 551, p[1] - p[0], 318.3, LN, 1.6); });
[463, 469, 549, 704, 709.3, 790, 796, 876, 882, 1036, 1117, 1123].forEach(x => ln(x, 588, x, 869, '#bdbdbd', 1.3));
[555, 1031].forEach(x => { ln(x, 588, x, 787, '#bdbdbd', 1.3); ln(x, 797, x, 869, '#bdbdbd', 1.3); });
ln(348, 576, 618, 576, LN, 1.2); ln(968, 576, 1203, 576, LN, 1.2); ln(383, 588, 1203, 588, LN, 1.2);
rc(348, 576, 29, 12, LN, 1.3); s += `<path d="M354 588V595.6H377" fill="none" stroke="${LN}"/>`;
[634, 703, 772].forEach(y => { ln(352, y, 377, y, LN, 2); s += `<path d="M354 ${y}V${y + 28}H377" fill="none" stroke="${LN}" stroke-width="1.2"/>`; });
// right balconies
[634, 703, 772].forEach(y => { ln(1208, y, 1234, y, LN, 1.6); s += `<path d="M1231 ${y + 1}V${y + 28}H1208" fill="none" stroke="${LN}" stroke-width="1.2"/>`; });
s += `<path d="M1208 588H1231V595.6H1208" fill="none" stroke="${LN}"/>`; ln(1237, 576, 1237, 588, LN);
// sign and louvres
rc(694, 555, 197, 33, LN, 1.3);
tx(725, 571, '东至县青山中学', 19.2, '#e8e8e8');
[559, 561, 564, 566, 570, 574, 576, 578, 580, 583, 586].forEach(y => { ln(624, y, 694, y, '#a8a8a8', 1.1); ln(891, y, 962, y, '#a8a8a8', 1.1); });

// windows
const FL = [595.7, 664.3, 733.3, 802];
function winA(x, y, w = 80) {
  rc(x, y, w, 40, LN, 2); ln(x, y + 16.5, x + w, y + 16.5, LN, 2);
  [1, 2, 3].forEach(i => ln(x + w * i / 4, y, x + w * i / 4, y + 40, LN, 1.8));
}
function winB(x, y, w = 62) {
  rc(x, y, w, 40, LN, 2); ln(x, y + 10, x + w, y + 10, LN, 2);
  ln(x + 16.5, y, x + 16.5, y + 10, LN, 1.3); ln(x + w - 16.5, y, x + w - 16.5, y + 10, LN, 1.3);
  [1, 2, 3].forEach(i => ln(x + w * i / 4, y + 10, x + w * i / 4, y + 40, LN, 1.8));
}
function winC(x, y) {
  rc(x, y, 40.6, 40, LN, 2); ln(x, y + 11.5, x + 40.6, y + 11.5, LN, 2);
  [1, 2].forEach(i => ln(x + 40.6 * i / 3, y, x + 40.6 * i / 3, y + 40, LN, 1.8));
}
function door(x, w) {
  rc(x, 802, w, 58.5, LN, 1.6); ln(x, 811, x + w, 811, LN, 1.8);
  rc(x + 2, 813, w - 4, 46, LN, 1.2); ln(x + w / 2 - 1, 813, x + w / 2 - 1, 859, LN, 1); ln(x + w / 2 + 1, 813, x + w / 2 + 1, 859, LN, 1);
  ln(x + 2, 837, x + w - 2, 837, '#b8b8b8', 2);
}
FL.forEach((y, i) => {
  [469.3, 624.5, 710, 796, 883, 1036.7].forEach(x => winA(x, y));
  winC(402.7, y); winC(1142.7, y);
  if (i < 3) { winB(555, y); winB(968.5, y); }
});
door(555, 62); door(968.5, 62);
[[549, 617], [968, 1036]].forEach(p => {
  ln(p[0], 787, p[1], 787, '#a8a8a8', 1.2); ln(p[0], 797, p[1], 797, '#a8a8a8', 1.2);
  [863, 865, 867].forEach(y => ln(p[0], y, p[1], y, '#a0a0a0', 1));
});

// dimensions
const tick = (x, y) => { s += `<path d="M${x - 3} ${y}h6M${x} ${y - 3}v6" stroke="#f0f0f0" stroke-width="1"/>`; };
ln(1245.7, 586, 1245.7, 869, GN, 1.4); ln(1264, 551, 1264, 869, GN, 1.4); ln(1280, 576, 1280, 869, GN, 1.4);
[[551, 1215, 1268], [576, 1210, 1285], [586, 1212, 1250], [595, 1210, 1250], [635, 1210, 1250], [654.6, 1210, 1268], [664, 1210, 1250], [704, 1210, 1250], [723.5, 1210, 1268], [733, 1210, 1250], [773, 1210, 1250], [792, 1210, 1268], [802, 1210, 1250], [842, 1210, 1250], [861, 1210, 1268], [869, 1210, 1285]].forEach(d => {
  ln(d[1], d[0], d[2], d[0], GN, 1.3);
  if (d[0] !== 551 && d[0] !== 576) tick(1245.7, d[0]);
  if ([551, 576, 586, 654.6, 723.5, 792, 861, 869].includes(d[0])) tick(1264, d[0]);
});
tick(1280, 576); tick(1280, 869);
ln(916, 551, 916, 588, GN, 1.4); tick(916, 552); tick(916, 587); ln(891, 552, 920, 552, GN, 1.2); ln(891, 587, 920, 587, GN, 1.2);
ln(993, 551, 993, 588, GN, 1.4); tick(993, 551); tick(993, 576); tick(993, 587); ln(973, 551, 997, 551, GN, 1.2); ln(968, 576, 997, 576, GN, 1.2); ln(968, 587, 997, 587, GN, 1.2);
[[909, 544, '200'], [910, 573, '1700'], [987, 564, '1300'], [987, 582, '500'], [1258, 568, '1300'], [1254, 578, '500'], [1238, 595, '500'], [1240, 615, '2100'], [1258, 620, '3600'], [1239, 645, '1000'], [1235, 661, '50'], [1240, 684, '2100'], [1258, 689, '3600'], [1239, 713, '1000'], [1235, 730, '50'], [1240, 753, '2100'], [1258, 758, '3600'], [1239, 782, '1000'], [1235, 798, '50'], [1240, 822, '2100'], [1258, 827, '3600'], [1239, 852, '1000'], [1239, 877, '450'], [1258, 877, '450'], [1274, 723, '15350']].forEach(r => rot(r[0], r[1], r[2]));
const fit = 'text-anchor="end" font-family="Liberation Sans" lengthAdjust="spacingAndGlyphs"';
[[586, '14.400', 21], [654.6, '10.800', 21], [723.5, '7.200', 18], [792, '3.600', 18], [861, '±0.000', 23]].forEach(e => {
  ln(1264, e[0], 1293, e[0], '#b5b5b5', 1);
  s += `<path d="M1323 ${e[0] - 6}H1288l5 6 5-6" fill="none" stroke="${GN}" stroke-width="1.3"/>`;
  tx(1323, e[0] - 11, e[1], 10, '#cfcfcf', `${fit} textLength="${e[2]}"`);
});
ln(1264, 869, 1293, 869, '#b5b5b5', 1);
s += `<path d="M1323 875H1288l5-6 5 6" fill="none" stroke="${GN}" stroke-width="1.3"/>`;
tx(1323, 881, '−0.450', 10, '#cfcfcf', `${fit} textLength="23"`);

// labels
tx(513, 492, '粉白色乳胶漆', 13, '#e6e6e6', 'font-weight="500"');
tx(355, 897, '粉精红色乳胶漆', 13, '#e6e6e6', 'font-weight="500"');
s += `<text x="701" y="976" font-size="38" fill="#f0f0f0" textLength="158" lengthAdjust="spacing">北立面图</text>`;
ln(698.5, 978.5, 865.6, 978.5, '#00e000', 3);
tx(878, 973, '1:100', 14, '#d5d5d5', 'font-family="Liberation Serif" textLength="32" lengthAdjust="spacingAndGlyphs"');

// lower sheet showing through the command bar
tx(468, 1282, '粉白色乳胶漆', 13, '#ffffff', 'font-weight="500"');
ln(324, 1293, 1247, 1293, '#ffffff', 1.5);
[423, 496, 595, 663, 739, 836, 915, 1008, 1076, 1153, 1247].forEach(x => ln(x, 1293, x, 1302, '#ffffff', 1.5));

// view cube
s += `<circle cx="1484" cy="209" r="53.5" fill="none" stroke="#2b2b2b" stroke-width="10"/>`;
s += `<rect x="1459" y="184" width="50" height="50" fill="#a2a2a2" stroke="#5c5c5c"/><rect x="1469" y="193" width="31" height="31" fill="#8d8d91"/>`;
s += `<text x="1484" y="209" text-anchor="middle" dominant-baseline="central" font-size="27" fill="#6a6a6e" font-weight="300">上</text>`;
[[1484, 156, '北'], [1484, 265, '南'], [1538, 210, '东'], [1429, 210, '西']].forEach(d => {
  s += `<text x="${d[0]}" y="${d[1]}" text-anchor="middle" dominant-baseline="central" font-size="18" fill="#9a9a9a">${d[2]}</text>`;
});
s += `<rect x="1461" y="294" width="46" height="16" rx="4" fill="#7b7b84" stroke="#5f5f66"/><text x="1465" y="306" font-size="10.5" fill="#4d4d55" font-family="Liberation Sans">WCS</text><path d="M1495 300h7l-3.5 4z" fill="#9a9aa2"/>`;

document.getElementById('drawing').innerHTML = s;
</script>
</body>
</html>
